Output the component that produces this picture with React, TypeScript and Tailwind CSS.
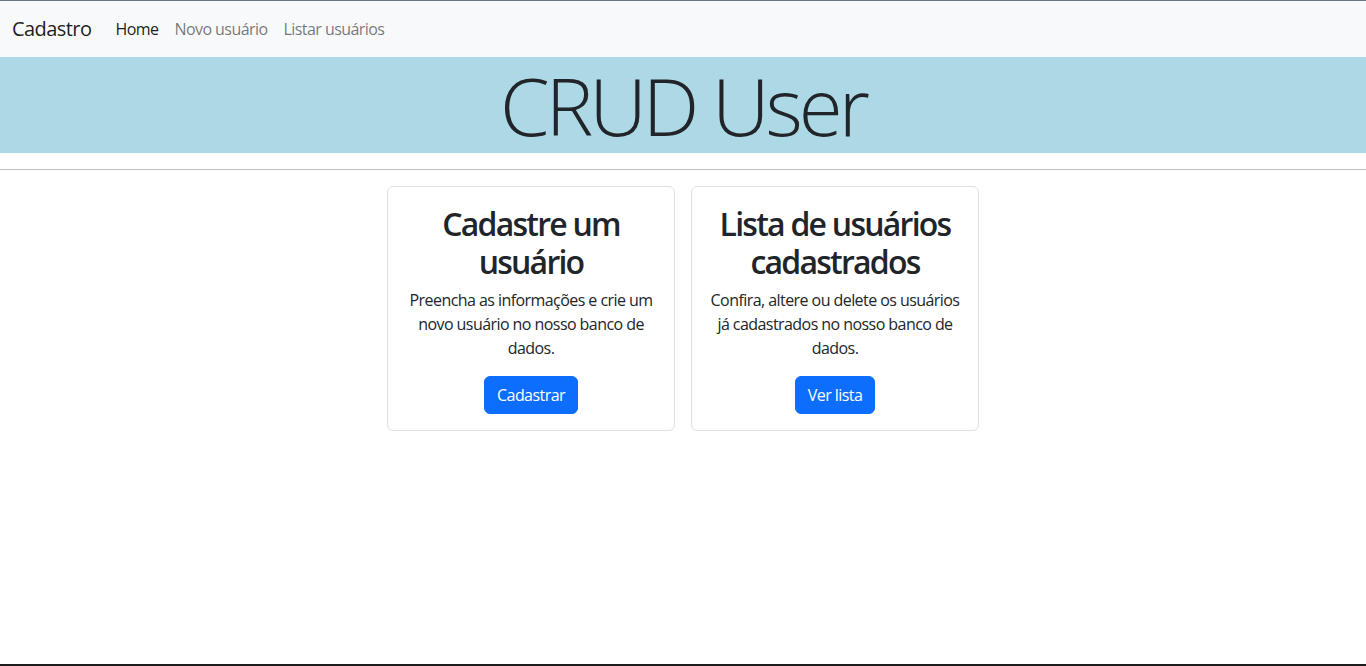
const font = { fontFamily: '"Open Sans", "Noto Sans", "Liberation Sans", sans-serif' }

function Card({ title, text, action }: { title: string; text: string; action: string }) {
  return (
    <div className="w-[288px] border border-[#dee2e6] rounded-md bg-white p-4 text-center">
      <h2 className="text-[32px] leading-[1.2] font-semibold tracking-[-0.055em] mt-0.5 mb-1.5 text-[#212529]">{title}</h2>
      <p className="text-base leading-6 mb-4 text-[#212529]">{text}</p>
      <button className="bg-[#0d6efd] text-white text-base leading-6 px-3 py-1.5 rounded-md border border-[#0d6efd]">
        {action}
      </button>
    </div>
  )
}

export default function App() {
  return (
    <div
      className="h-[666px] flex flex-col bg-white text-[#212529] tracking-[-0.035em] border-t border-[#6b7785] border-b-2 border-b-[#1c1c1c]"
      style={font}
    >
      {/* navbar */}
      <nav className="h-14 bg-[#f8f9fa] flex items-center px-3">
        <span className="text-xl leading-[30px] text-black/90 mr-4">Cadastro</span>
        <a className="px-2 text-base text-black/90">Home</a>
        <a className="px-2 text-base text-black/55">Novo usuário</a>
        <a className="px-2 text-base text-black/55">Listar usuários</a>
      </nav>

      <header className="h-24 bg-[#add8e6] flex justify-center">
        <h1 className="text-[80px] leading-[96px] font-light tracking-[-0.05em]">CRUD User</h1>
      </header>

      <hr className="my-4 border-t border-[#bfbfbf]" />

      <main className="flex justify-center gap-4">
        <Card
          title="Cadastre um usuário"
          text="Preencha as informações e crie um novo usuário no nosso banco de dados."
          action="Cadastrar"
        />
        <Card
          title="Lista de usuários cadastrados"
          text="Confira, altere ou delete os usuários já cadastrados no nosso banco de dados."
          action="Ver lista"
        />
      </main>
    </div>
  )
}
